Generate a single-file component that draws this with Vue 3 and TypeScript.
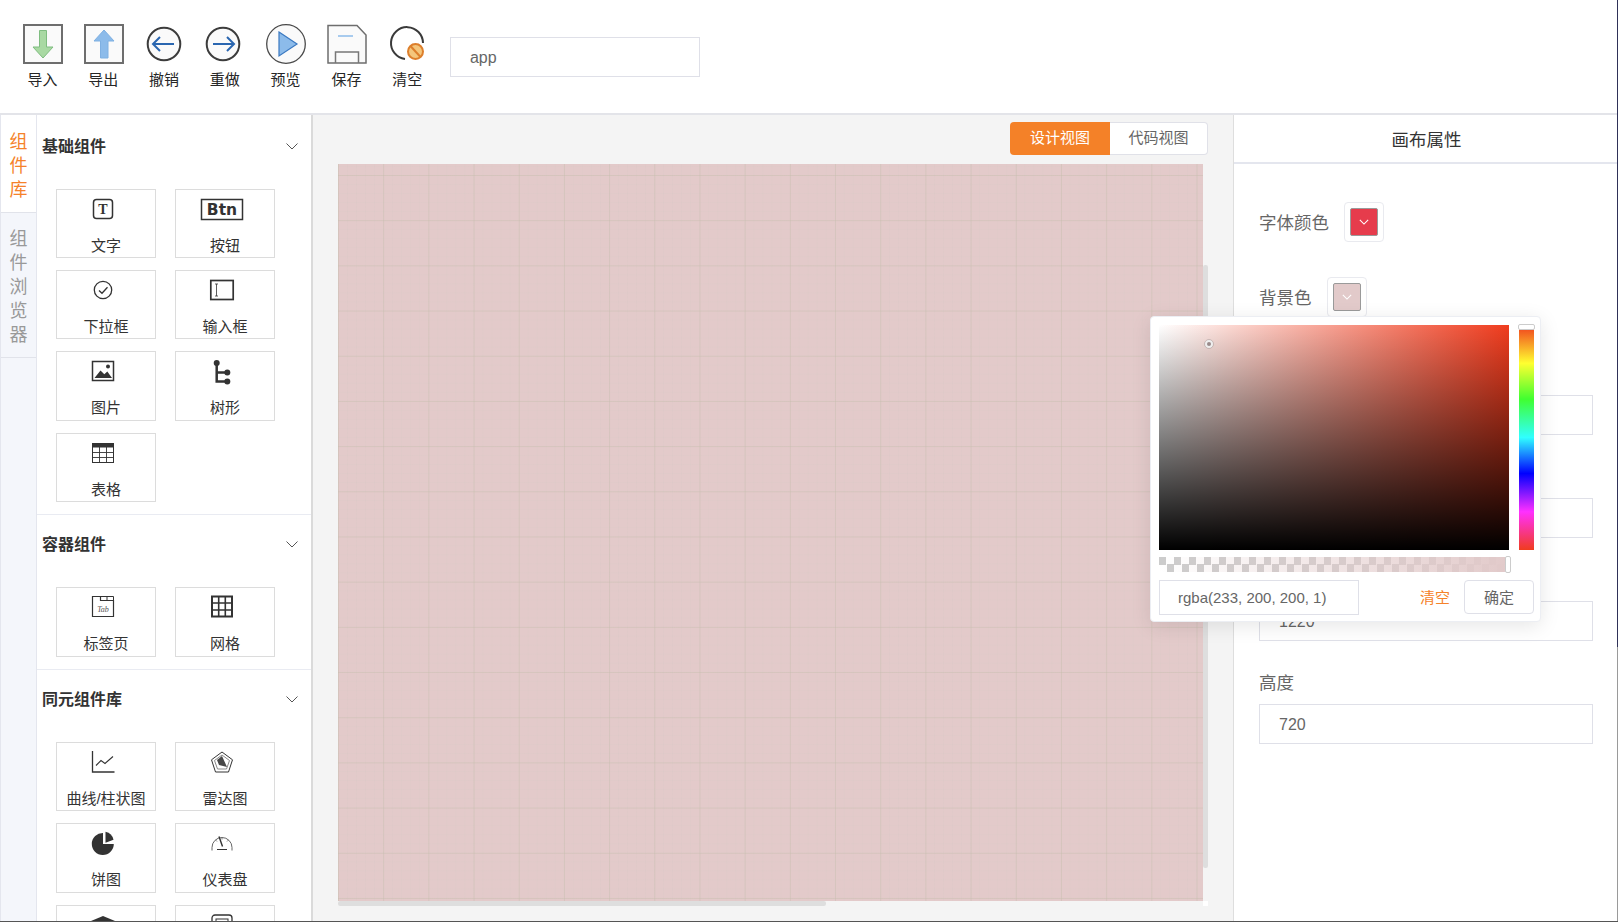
<script setup lang="ts">
interface Tool { label: string; svg: string; dx?: number }
interface Card { label: string; svg: string; w?: number }
interface Section { title: string; cards: Card[] }

const tools: Tool[] = [
  { label: '导入', dx: 1, svg: '<rect x="1" y="1" width="38" height="38" fill="#fafafa" stroke="#6e6e6e" stroke-width="2"/><path d="M16.500 6.500h7v16.500H30L20 34 10 23h6.500z" fill="#a9d9a3" stroke="#7fbd80"/>' },
  { label: '导出', dx: 1, svg: '<rect x="1" y="1" width="38" height="38" fill="#fafafa" stroke="#6e6e6e" stroke-width="2"/><path d="M20 6l10 11h-6v17h-7.500V17H10z" fill="#8cbbea" stroke="#7fb0e2"/>' },
  { label: '撤销', svg: '<circle cx="20" cy="20" r="16.300" fill="#fafafa" stroke="#3c3c3c" stroke-width="2"/><path d="M9 20h21M16 13l-7 7 7 7" fill="none" stroke="#2a66b0" stroke-width="2"/>' },
  { label: '重做', svg: '<circle cx="18" cy="20" r="16.300" fill="#fafafa" stroke="#3c3c3c" stroke-width="2"/><path d="M29 20H8M22 13l7 7-7 7" fill="none" stroke="#2a66b0" stroke-width="2"/>' },
  { label: '预览', svg: '<circle cx="20" cy="20" r="19.300" fill="#fafafa" stroke="#4a4a4a" stroke-width="1.300"/><path d="M13 8l18 12-18 12z" fill="#8cbbea" stroke="#3a78c0" stroke-width="1.200"/>' },
  { label: '保存', dx: 1, svg: '<path d="M1 1.500h29l9 9.500v28H1z" fill="#fafafa" stroke="#6e6e6e" stroke-width="1.500"/><path d="M11 12h15" stroke="#8cbbea" stroke-width="1.500"/><path d="M8.500 39V28h23v11" fill="none" stroke="#777" stroke-width="1.500"/>' },
  { label: '清空', dx: 2, svg: '<path d="M34 19A16 16 0 1 0 16 35" fill="none" stroke="#3a3a3a" stroke-width="2"/><circle cx="26.500" cy="27.500" r="7.500" fill="#f4c67c" stroke="#dd7f2c" stroke-width="2"/><path d="M21.500 22l10 11" stroke="#dd7f2c" stroke-width="2"/>' },
]

const c = '#333'
const sections: Section[] = [
  {
    title: '基础组件',
    cards: [
      { label: '文字', svg: `<rect x="2.500" y="2.500" width="19" height="19" rx="3" fill="none" stroke="${c}" stroke-width="1.500"/><text x="12" y="17" text-anchor="middle" font-size="14" font-weight="700" font-family="Liberation Serif, serif" fill="${c}">T</text>` },
      { label: '按钮', w: 44, svg: `<rect x="1.500" y="2.500" width="41" height="20" fill="#fff" stroke="${c}" stroke-width="1.500"/><text x="22" y="18" text-anchor="middle" font-size="15.500" font-weight="700" font-family="DejaVu Sans, sans-serif" fill="${c}">Btn</text>` },
      { label: '下拉框', svg: `<circle cx="12" cy="12" r="8.700" fill="none" stroke="${c}" stroke-width="1.300"/><path d="M8 12.500l3 2.800 5.500-6" fill="none" stroke="${c}" stroke-width="1.300"/>` },
      { label: '输入框', svg: `<rect x="0.800" y="2.500" width="22.400" height="19" fill="#fff" stroke="${c}" stroke-width="1.700"/><path d="M6.500 6v12M5 6h3M5 18h3" fill="none" stroke="${c}" stroke-width="0.800"/>` },
      { label: '图片', svg: `<rect x="1.500" y="2.500" width="21" height="19" fill="#fff" stroke="${c}" stroke-width="1.500"/><path d="M3.500 19l6-7.500 3.800 3.700 3-2.700 4.700 6.500z" fill="${c}"/><circle cx="17" cy="7.500" r="2" fill="${c}"/>` },
      { label: '树形', svg: `<path d="M6.700 4v18.500h10.600M6.700 13.500h10.600" fill="none" stroke="${c}" stroke-width="2.500"/><circle cx="6.700" cy="4" r="3" fill="${c}"/><circle cx="17.300" cy="13.500" r="3" fill="${c}"/><circle cx="17.300" cy="22.500" r="3" fill="${c}"/>` },
      { label: '表格', svg: `<rect x="1.500" y="2.500" width="21" height="19" fill="#fff" stroke="${c}" stroke-width="1"/><rect x="1.500" y="2.500" width="21" height="4" fill="${c}"/><path d="M1.500 11.500h21M1.500 16.500h21M8.500 6v15M15.500 6v15" stroke="${c}" stroke-width="0.900"/>` },
    ],
  },
  {
    title: '容器组件',
    cards: [
      { label: '标签页', svg: `<path d="M1.500 21.500V1.500h8v4h13v16z" fill="#fff" stroke="${c}" stroke-width="1.200"/><path d="M9.500 5.500V1.500h13v4M16 1.500v4" fill="none" stroke="${c}" stroke-width="1"/><text x="12" y="17" text-anchor="middle" font-size="8" font-style="italic" font-family="Liberation Serif, serif" fill="#555">Tab</text>` },
      { label: '网格', svg: `<rect x="2" y="1.500" width="20" height="20" fill="none" stroke="${c}" stroke-width="2"/><path d="M2 8h20M2 15h20M8.700 1.500v20M15.300 1.500v20" stroke="${c}" stroke-width="1.600"/>` },
    ],
  },
  {
    title: '同元组件库',
    cards: [
      { label: '曲线/柱状图', svg: `<path d="M1.500 1v21h22" fill="none" stroke="${c}" stroke-width="1.300"/><path d="M5 15.500l5-5 4 3 8-7" fill="none" stroke="${c}" stroke-width="1.100"/>` },
      { label: '雷达图', svg: `<path d="M12 2l10.500 7.800-4 12.200h-13L1.500 9.800z" fill="#fff" stroke="${c}" stroke-width="1"/><path d="M12 5l7.500 5.500-3 8.500h-9l-3-8.500z" fill="none" stroke="#888" stroke-width="1"/><path d="M12 6l5 11-8-2-2-5z" fill="${c}" opacity="0.900"/>` },
      { label: '饼图', svg: `<g transform="translate(1.500 0)"><path d="M10.500 2v11h10.800A11 11 0 1 1 10.500 2z" fill="${c}"/><path d="M13 0.800a10.500 10.500 0 0 1 8 8l-8 3z" fill="${c}"/></g>` },
      { label: '仪表盘', svg: `<path d="M2 19.500v-3a10 10 0 0 1 20 0v3" fill="none" stroke="#666" stroke-width="1"/><path d="M9 5.500l3.500 10" stroke="${c}" stroke-width="1.400"/><path d="M7 18.500h10" stroke="${c}" stroke-width="1"/><path d="M5.500 9l1.500 1.500M18.500 9L17 10.500M12 6.500v2" stroke="#666" stroke-width="0.800"/>` },
      { label: '', svg: `<path d="M12 3l12 5-12 5L0 8z" fill="${c}"/><path d="M5 11v6h14v-6" fill="${c}"/>` },
      { label: '', svg: `<rect x="2" y="2" width="20" height="20" rx="3" fill="#fff" stroke="${c}" stroke-width="1.300"/><rect x="6" y="6" width="12" height="5" fill="none" stroke="${c}"/>` },
    ],
  },
]

const fields = [
  { label: '', value: '' },
  { label: '', value: '' },
  { label: '', value: '1220' },
  { label: '高度', value: '720' },
]
</script>

<template>
  <div class="page">
    <header class="toolbar">
      <div v-for="t in tools" :key="t.label" class="tool">
        <svg class="tool-icon" :viewBox="`${-(t.dx ?? 0)} 0 40 40`" v-html="t.svg"></svg>
        <span class="tool-label">{{ t.label }}</span>
      </div>
      <div class="name-input">app</div>
    </header>

    <main class="body">
      <aside class="sidebar">
        <nav class="tabs">
          <div class="tab tab-active">
            <span>组</span><span>件</span><span>库</span>
          </div>
          <div class="tab">
            <span>组</span><span>件</span><span>浏</span><span>览</span><span>器</span>
          </div>
        </nav>
        <div class="library">
          <section v-for="s in sections" :key="s.title" class="lib-section">
            <div class="lib-head">
              <span>{{ s.title }}</span>
              <svg class="chev" viewBox="0 0 12 7" width="12" height="7">
                <path d="M0.500 0.500L6 6l5.500-5.500" fill="none" stroke="#555" stroke-width="1" />
              </svg>
            </div>
            <div class="cards">
              <div v-for="(k, i) in s.cards" :key="i" class="card">
                <svg
                  class="card-icon"
                  :viewBox="`0 0 ${k.w ?? 24} 24`"
                  :width="k.w ?? 24"
                  height="24"
                  v-html="k.svg"
                ></svg>
                <span v-if="k.label" class="card-label">{{ k.label }}</span>
              </div>
            </div>
          </section>
        </div>
      </aside>

      <section class="stage">
        <div class="view-row">
          <div class="view-tabs">
            <span class="view-btn view-on">设计视图</span>
            <span class="view-btn">代码视图</span>
          </div>
        </div>
        <div class="canvas-wrap">
          <div class="canvas"></div>
          <div class="thumb-v"></div>
          <div class="thumb-h"></div>
          <div class="corner"></div>
        </div>
      </section>

      <aside class="props">
        <div class="props-title">画布属性</div>
        <div class="props-body">
          <div class="color-row">
            <span class="prop-label">字体颜色</span>
            <div class="trigger">
              <div class="swatch swatch-red">
                <svg viewBox="0 0 12 7" width="10" height="6"><path d="M1 1l5 5 5-5" fill="none" stroke="#fff" stroke-width="1.300" /></svg>
              </div>
            </div>
          </div>
          <div class="color-row">
            <span class="prop-label">背景色</span>
            <div class="trigger">
              <div class="swatch swatch-pink">
                <svg viewBox="0 0 12 7" width="10" height="6"><path d="M1 1l5 5 5-5" fill="none" stroke="#fff" stroke-width="1.300" /></svg>
              </div>
            </div>
          </div>
          <div class="fields">
            <div v-for="(f, i) in fields" :key="i" class="field">
              <span class="prop-label field-label">{{ f.label }}</span>
              <div class="text-input">{{ f.value }}</div>
            </div>
          </div>
        </div>
      </aside>
    </main>

    <div class="picker">
      <div class="pick-top">
        <div class="sv"><i class="sv-dot"></i></div>
        <div class="hue"><i class="hue-thumb"></i></div>
      </div>
      <div class="alpha"><i class="alpha-thumb"></i></div>
      <div class="pick-foot">
        <div class="pick-input">rgba(233, 200, 200, 1)</div>
        <span class="pick-clear">清空</span>
        <span class="pick-ok">确定</span>
      </div>
    </div>
  </div>
</template>

<style scoped>
.page {
  position: relative;
  width: 1618px;
  height: 922px;
  box-sizing: border-box;
  overflow: hidden;
  display: flex;
  flex-direction: column;
  background: #fff;
  border-bottom: 1px solid #555;
  padding-right: 1px;
  font-family: "Liberation Sans", "Noto Sans CJK SC", sans-serif;
  color: #333;
}
.page::after {
  content: "";
  position: absolute;
  right: 0;
  top: 0;
  width: 1px;
  height: 100%;
  background: linear-gradient(to bottom, #2f3158 70.2%, #9a9a9a 70.2%);
}

.toolbar {
  flex: none;
  height: 115px;
  box-sizing: border-box;
  border-bottom: 2px solid #e3e4e9;
  padding: 24px 0 0 12px;
  display: flex;
  align-items: flex-start;
}
.tool {
  width: 60.8px;
  display: flex;
  flex-direction: column;
  align-items: center;
}
.tool-icon {
  width: 40px;
  height: 40px;
  margin-bottom: 6px;
  overflow: visible;
}
.tool-label {
  font-size: 15px;
  line-height: 20px;
  color: #262626;
}
.name-input {
  margin: 13px 0 0 12.4px;
  width: 250px;
  height: 40px;
  box-sizing: border-box;
  border: 1px solid #dfe0e8;
  padding-left: 19px;
  font-size: 16px;
  line-height: 40px;
  color: #666;
}

.body {
  flex: 1;
  min-height: 0;
  display: flex;
}

.sidebar {
  flex: none;
  width: 313px;
  display: flex;
  box-sizing: border-box;
  border-right: 2px solid #dadada;
  overflow: hidden;
}
.tabs {
  flex: none;
  width: 37px;
  box-sizing: border-box;
  background: #f4f6fb;
  border-left: 1px solid #e4e6ee;
  border-right: 1px solid #e4e6ee;
}
.tab {
  display: flex;
  flex-direction: column;
  align-items: center;
  padding: 14px 0 10px;
  font-size: 18px;
  line-height: 24px;
  color: #999;
  border-bottom: 1px solid #e1e3ea;
}
.tab-active {
  padding: 15px 0 10px;
  background: #fff;
  color: #f5822a;
}
.library {
  flex: 1;
  min-width: 0;
}
.lib-section {
  padding-bottom: 12.6px;
  border-bottom: 1px solid #e9ebf2;
}
.lib-section:first-child {
  padding-top: 2px;
}
.lib-head {
  height: 58px;
  box-sizing: border-box;
  padding: 0 13px 2px 5px;
  display: flex;
  align-items: center;
  justify-content: space-between;
  font-size: 16px;
  font-weight: 700;
  color: #333;
}
.chev {
  margin-top: 2px;
}
.cards {
  margin-top: 14px;
  padding-left: 19px;
  display: grid;
  grid-template-columns: 100px 100px;
  column-gap: 19px;
  row-gap: 12px;
}
.card {
  height: 69.2px;
  box-sizing: border-box;
  border: 1px solid #dcdcdc;
  display: flex;
  flex-direction: column;
  align-items: center;
  padding-top: 7px;
}
.card-icon {
  flex: none;
  margin-right: 6px;
  overflow: visible;
}
.card-label {
  margin-top: 15px;
  font-size: 15px;
  line-height: 20px;
  color: #333;
}

.stage {
  flex: none;
  width: 921px;
  box-sizing: border-box;
  background: #f4f4f4;
  border-right: 1px solid #dedede;
  padding: 7px 25px 0;
}
.view-row {
  height: 42px;
  display: flex;
  justify-content: flex-end;
}
.view-tabs {
  height: 33px;
  display: flex;
  font-size: 15px;
}
.view-btn {
  width: 98px;
  box-sizing: border-box;
  text-align: center;
  background: #fff;
  color: #666;
  border: 1px solid #e0e1e8;
  border-left: none;
  border-radius: 0 4px 4px 0;
  line-height: 29px;
}
.view-on {
  width: 100px;
  background: #f48128;
  border: none;
  color: #fff;
  border-radius: 4px 0 0 4px;
  line-height: 31px;
}
.canvas-wrap {
  position: relative;
  width: 870px;
  height: 742px;
}
.canvas {
  width: 865px;
  height: 737px;
  background-color: #e3caca;
  background-image:
    linear-gradient(to right, rgba(200, 190, 175, 0.45) 1px, transparent 1px),
    linear-gradient(to bottom, rgba(200, 190, 175, 0.45) 1px, transparent 1px),
    linear-gradient(to right, rgba(200, 200, 190, 0.1) 1px, transparent 1px),
    linear-gradient(to bottom, rgba(200, 200, 190, 0.1) 1px, transparent 1px);
  background-size: 45.2px 45.2px, 45.2px 45.2px, 9.04px 9.04px, 9.04px 9.04px;
  background-position: 0 11px, 0 11px, 0 2px, 0 2px;
}
.thumb-v {
  position: absolute;
  right: 0;
  top: 101px;
  width: 5px;
  height: 603px;
  background: #dedede;
  border-radius: 2px;
}
.thumb-h {
  position: absolute;
  left: 0;
  bottom: 0;
  width: 488px;
  height: 5px;
  background: #dedede;
  border-radius: 2px;
}
.corner {
  position: absolute;
  right: 0;
  bottom: 0;
  width: 5px;
  height: 5px;
  background: #fff;
}

.props {
  flex: 1;
  min-width: 0;
}
.props-title {
  height: 49px;
  box-sizing: border-box;
  border-bottom: 2px solid #e4e6ee;
  padding-left: 2px;
  text-align: center;
  font-size: 17.5px;
  line-height: 50px;
  color: #333;
}
.props-body {
  padding: 38px 24px 0 25px;
}
.color-row {
  height: 40px;
  margin-bottom: 35px;
  display: flex;
  align-items: center;
}
.prop-label {
  font-size: 17.5px;
  line-height: 24px;
  padding-top: 2px;
  color: #666;
}
.field-label {
  padding-top: 0;
  min-height: 24px;
}
.trigger {
  margin-left: 15px;
  width: 40px;
  height: 40px;
  box-sizing: border-box;
  border: 1px solid #e9eaef;
  border-radius: 4px;
  display: flex;
  align-items: center;
  justify-content: center;
}
.swatch {
  width: 28px;
  height: 28px;
  box-sizing: border-box;
  border: 1px solid #9a9a9a;
  border-radius: 2px;
  display: flex;
  align-items: center;
  justify-content: center;
}
.swatch-red {
  background: #e63c4c;
}
.swatch-pink {
  background: #e2caca;
}
.fields {
  margin-top: 45px;
  display: flex;
  flex-direction: column;
  gap: 30px;
}
.field {
  display: flex;
  flex-direction: column;
  gap: 9px;
}
.text-input {
  height: 40px;
  box-sizing: border-box;
  border: 1px solid #dfe0e8;
  padding-left: 19px;
  font-size: 16px;
  line-height: 39px;
  color: #666;
}

.picker {
  position: absolute;
  left: 1150px;
  top: 316px;
  width: 391px;
  height: 306px;
  box-sizing: border-box;
  padding: 8px 6px 7px 8px;
  background: #fff;
  border: 1px solid #eceef3;
  border-radius: 4px;
  box-shadow: 0 4px 20px rgba(0, 0, 0, 0.1);
}
.pick-top {
  display: flex;
  gap: 10px;
}
.sv {
  position: relative;
  flex: none;
  width: 350px;
  height: 225px;
  background:
    linear-gradient(to top, #000, rgba(0, 0, 0, 0)),
    linear-gradient(to right, #fff, #f03c1e);
}
.sv-dot {
  position: absolute;
  left: 46px;
  top: 15px;
  width: 8px;
  height: 8px;
  box-sizing: border-box;
  border: 2px solid #eee;
  border-radius: 50%;
  background: #998a8a;
  outline: 1px solid rgba(120, 120, 120, 0.3);
}
.hue {
  position: relative;
  flex: none;
  width: 15px;
  height: 225px;
  background: linear-gradient(
    to bottom,
    #f03c1e 0%,
    #ffff30 17%,
    #40ff30 33%,
    #30ffff 50%,
    #0000ff 66%,
    #ff30ff 83%,
    #f03c1e 100%
  );
}
.hue-thumb {
  position: absolute;
  left: -1px;
  top: -1px;
  width: 17px;
  height: 6px;
  box-sizing: border-box;
  background: #fff;
  border: 1px solid #ccc;
  border-radius: 2px;
}
.alpha {
  position: relative;
  width: 350px;
  height: 15px;
  margin-top: 7px;
  background:
    linear-gradient(to right, rgba(226, 202, 202, 0), #e2caca),
    repeating-conic-gradient(#fff 0 25%, #ccc 0 50%) 0 0 / 15px 15px;
}
.alpha-thumb {
  position: absolute;
  right: -2px;
  top: -1px;
  width: 6px;
  height: 17px;
  box-sizing: border-box;
  background: #fff;
  border: 1px solid #ccc;
  border-radius: 2px;
}
.pick-foot {
  margin-top: 8px;
  width: 375px;
  display: flex;
  align-items: flex-start;
}
.pick-input {
  width: 200px;
  height: 35px;
  box-sizing: border-box;
  border: 1px solid #dfe0e8;
  padding-left: 18px;
  font-size: 15px;
  line-height: 33px;
  color: #666;
}
.pick-clear {
  margin-left: 61px;
  font-size: 15px;
  line-height: 36px;
  color: #f5822a;
}
.pick-ok {
  margin-left: 14px;
  width: 70px;
  height: 34px;
  box-sizing: border-box;
  border: 1px solid #dfe0e8;
  border-radius: 4px;
  text-align: center;
  font-size: 15px;
  line-height: 33px;
  color: #666;
}
</style>
